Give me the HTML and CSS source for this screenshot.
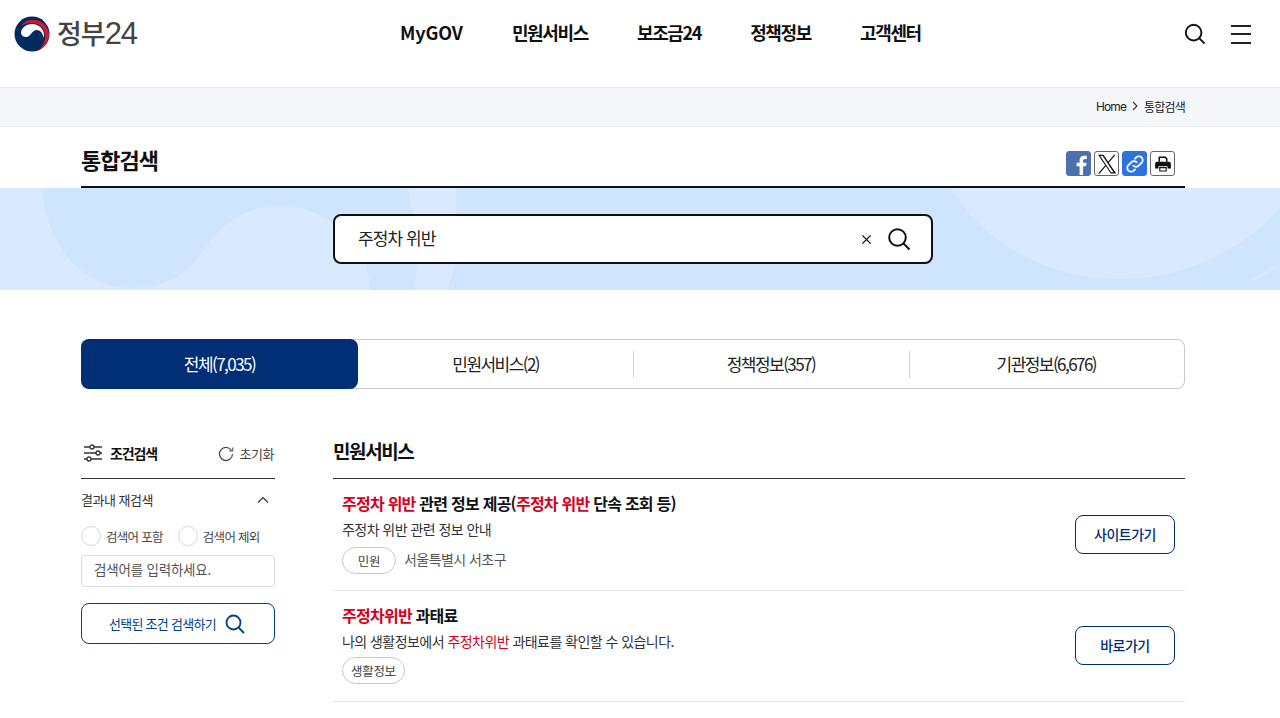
FILE: index.html
```html
<!DOCTYPE html>
<html lang="ko">
<head>
<meta charset="utf-8">
<title>통합검색 | 정부24</title>
<link rel="stylesheet" href="styles.css">
</head>
<body>
<header class="header">
  <a class="logo">
    <svg class="logo-mark" viewBox="0 0 36 36" width="36" height="36">
      <circle cx="18" cy="18" r="17.500" fill="#002b5c"/>
      <path d="M7 10C11 4 18 2.500 24 4.500 31 7 35 13 35 19c0 7-5 13-11 16 5-5 7.500-10 7-16C30.500 12 25 7 18 7c-4.500 0-8 1-11 3z" fill="#d6182f"/>
      <path d="M7 17C7 12 12 8 18 8c7 0 12 5 12 11 0 1-.2 2-.5 3-.5-5.500-4-8.500-7.500-8-4 .5-5 6-9 7-3 .5-5.500-1-6-4z" fill="#fff"/>
    </svg>
    <span class="logo-text">정부<span class="logo-num">24</span></span>
  </a>
  <nav class="gnb">
    <a class="gnb-latin">MyGOV</a><a>민원서비스</a><a>보조금24</a><a>정책정보</a><a>고객센터</a>
  </nav>
  <div class="util">
    <svg viewBox="0 0 24 24" width="22" height="22" fill="none" stroke="#111" stroke-width="2.100"><circle cx="10.500" cy="10.500" r="8.500"/><path d="M16.500 16.500l6 6"/></svg>
    <span class="burger"><i></i><i></i><i></i></span>
  </div>
</header>

<div class="crumb-bar">
  <div class="container crumb"><span class="crumb-home">Home</span><svg viewBox="0 0 8 10" width="8" height="10" fill="none" stroke="#333" stroke-width="1.100"><path d="M2 1l4 4-4 4"/></svg><span>통합검색</span></div>
</div>

<div class="container title-row">
  <h1>통합검색</h1>
  <div class="share">
    <span class="sq fb"><svg viewBox="0 0 25 25" width="25" height="25"><path d="M17.500 25v-9.500h3.200l.6-3.800h-3.800V9.500c0-1.200.5-2 2-2h2V4.200c-.7-.1-1.800-.2-3-.2-3 0-4.800 1.800-4.800 5v2.700h-3.300v3.800h3.300V25z" fill="#fff"/></svg></span>
    <span class="sq"><svg viewBox="0 0 24 24" width="20" height="20"><path d="M14.200 10.500L22.300 1h-1.900l-7 8.200L7.800 1H1.300l8.500 12.400L1.300 23.300h1.900l7.400-8.700 5.900 8.700h6.500zM3.900 2.500h2.900l13 19.400h-2.900z" fill="#111"/></svg></span>
    <span class="sq link"><svg viewBox="0 0 24 24" width="20" height="20" fill="none" stroke="#fff" stroke-width="2.200" stroke-linecap="round"><path d="M10 14a4.500 4.500 0 0 0 6.500 0l3.500-3.500a4.600 4.600 0 0 0-6.500-6.500l-1.500 1.500"/><path d="M14 10a4.500 4.500 0 0 0-6.500 0L4 13.500a4.600 4.600 0 0 0 6.500 6.500l1.500-1.500"/></svg></span>
    <span class="sq"><svg viewBox="0 0 24 24" width="18" height="18"><path d="M6 2h9.500L18 4.500V9h-2V5.500L14.500 4H8v5H6z" fill="#111"/><path d="M4 9h16a2.500 2.500 0 0 1 2.500 2.500V18H18v-3H6v3H1.500v-6.500A2.500 2.500 0 0 1 4 9z" fill="#111"/><path d="M7 16h10v6H7z" fill="#111"/><path d="M8.500 17.500h7v3h-7z" fill="#fff"/></svg></span>
  </div>
</div>

<section class="band">
  <svg class="band-bg" viewBox="0 0 1280 102" aria-hidden="true">
    <path d="M0 0h42c4 60 43 100 88 100 40 0 58-15 78-43 14-20 37-39 72-39 40 0 75 27 86 58l5 26H0z" fill="#d9eaff"/>
    <path d="M408 0l5 26 4 50-2 26h32l9-26V0z" fill="#d9eaff"/>
    <path d="M950 0c40 62 105 91 170 91 60 0 120-26 160-71V0z" fill="#d9eaff"/>
    <path d="M1247 94l33-20v4l-26 16z" fill="#d5e8ff"/>
  </svg>
  <div class="searchbox">
    <span class="query">주정차 위반</span>
    <svg viewBox="0 0 12 12" width="11" height="11" fill="none" stroke="#111" stroke-width="1.500"><path d="M1.500 1.500l9 9M10.500 1.500l-9 9"/></svg>
    <svg class="search-ic" viewBox="0 0 24 24" width="24" height="24" fill="none" stroke="#111" stroke-width="2"><circle cx="10.500" cy="10.500" r="8.300"/><path d="M16.500 16.500l6 6"/></svg>
  </div>
</section>

<div class="container">
  <div class="tabs">
    <a class="tab active">전체(7,035)</a>
    <a class="tab">민원서비스(2)</a>
    <a class="tab">정책정보(357)</a>
    <a class="tab">기관정보(6,676)</a>
  </div>

  <div class="cols">
    <aside class="side">
      <div class="side-head">
        <svg viewBox="0 0 20 20" width="20" height="20" fill="none" stroke="#333" stroke-width="1.300"><path d="M1 4h6M11 4h8M1 10h12M17 10h2M1 16h3M8 16h11"/><circle cx="9" cy="4" r="2"/><circle cx="15" cy="10" r="2"/><circle cx="6" cy="16" r="2"/></svg>
        <strong>조건검색</strong>
        <span class="reset"><svg viewBox="0 0 16 16" width="16" height="16" fill="none" stroke="#444" stroke-width="1.200"><path d="M13.500 5.500A6.500 6.500 0 1 0 14.500 9"/><path d="M14.800 2.500v3.500h-3.500" stroke-width="1"/></svg>초기화</span>
      </div>
      <div class="side-sub">
        <span>결과내 재검색</span>
        <svg viewBox="0 0 12 8" width="12" height="8" fill="none" stroke="#333" stroke-width="1.200"><path d="M1 6.500l5-5 5 5"/></svg>
      </div>
      <div class="radios">
        <label class="radio"><i></i>검색어 포함</label>
        <label class="radio"><i></i>검색어 제외</label>
      </div>
      <div class="side-input">검색어를 입력하세요.</div>
      <button class="side-btn">선택된 조건 검색하기
        <svg viewBox="0 0 20 20" width="20" height="20" fill="none" stroke="#00408f" stroke-width="1.800"><circle cx="8.500" cy="8.500" r="7"/><path d="M13.500 13.500l5.500 5.500"/></svg>
      </button>
    </aside>

    <main class="results">
      <h2>민원서비스</h2>
      <article class="item">
        <div class="item-body">
          <h3><em>주정차 위반</em> 관련 정보 제공(<em>주정차 위반</em> 단속 조회 등)</h3>
          <p>주정차 위반 관련 정보 안내</p>
          <div class="meta"><span class="pill pill-wide">민원</span><span>서울특별시 서초구</span></div>
        </div>
        <a class="go">사이트가기</a>
      </article>
      <article class="item second">
        <div class="item-body">
          <h3><em>주정차위반</em> 과태료</h3>
          <p>나의 생활정보에서 <em>주정차위반</em> 과태료를 확인할 수 있습니다.</p>
          <div class="meta"><span class="pill">생활정보</span></div>
        </div>
        <a class="go">바로가기</a>
      </article>
    </main>
  </div>
</div>
</body>
</html>
```

FILE: styles.css
```css
* { box-sizing: border-box; }
html, body { margin: 0; padding: 0; }
body {
  height: 718px;
  overflow: hidden;
  background: #fff;
  color: #111;
  font-family: "Noto Sans CJK KR", "Noto Sans", sans-serif;
  font-size: 14px;
  letter-spacing: -0.5px;
}
h1, h2, h3, p { margin: 0; }
em { font-style: normal; color: #d6001c; }
.container { width: 1104px; margin-left: 81px; }

.header { height: 87px; position: relative; display: flex; align-items: flex-start; }
.logo { position: absolute; left: 14px; top: 15px; display: flex; align-items: center; gap: 7px; }
.logo-text { font-size: 27px; line-height: 36px; color: #444; font-weight: 500; letter-spacing: -1px; }
.logo-num { font-family: "Liberation Sans", sans-serif; font-size: 31px; font-weight: 400; letter-spacing: -1.300px; }
.gnb { display: flex; gap: 49px; margin: 19px 0 0 400px; }
.gnb a { font-size: 18px; line-height: 27px; font-weight: 700; letter-spacing: -1.350px; color: #111; }
.gnb a.gnb-latin { letter-spacing: -0.100px; }
.util { position: absolute; left: 1184px; top: 23px; display: flex; align-items: center; gap: 25px; }
.burger { display: flex; flex-direction: column; gap: 6.500px; width: 20px; }
.burger i { display: block; height: 2px; background: #222; }

.crumb-bar { height: 40px; background: #f4f6fa; border-top: 1px solid #e8e9ec; border-bottom: 1px solid #eeeff1; }
.crumb { display: flex; justify-content: flex-end; align-items: center; gap: 5px; height: 36px; font-size: 12px; color: #222; letter-spacing: -0.8px; }
.crumb-home { font-family: "Inter", sans-serif; letter-spacing: -0.900px; }

.title-row { height: 61px; border-bottom: 2px solid #111; display: flex; justify-content: space-between; padding-top: 16px; }
.title-row h1 { font-size: 22px; line-height: 33px; font-weight: 700; letter-spacing: -1px; }
.share { display: flex; gap: 3px; margin: 8px 10px 0 0; height: 25px; }
.sq { width: 25px; height: 25px; border: 1px solid #666; border-radius: 3px; display: flex; align-items: center; justify-content: center; overflow: hidden; background: #fff; }
.sq.fb { background: #4c6fb0; border-color: #4c6fb0; }
.sq.link { background: #2b74e0; border-color: #2b74e0; }

.band { height: 102px; position: relative; background: #cfe5fe; overflow: hidden; display: flex; padding: 26px 0 0 333px; }
.band-bg { position: absolute; left: 0; top: 0; width: 1280px; height: 102px; }
.searchbox { position: relative; width: 600px; height: 50px; background: #fff; border: 2px solid #111; border-radius: 8px; display: flex; align-items: center; padding: 0 20px 0 23px; gap: 15px; }
.query { flex: 1; font-size: 17px; line-height: 24px; margin-top: -2px; letter-spacing: -0.900px; color: #222; }

.tabs { margin-top: 49px; height: 50px; border: 1px solid #c9c9c9; border-radius: 8px; display: flex; }
.tab { flex: 1; display: flex; align-items: center; justify-content: center; padding-bottom: 2px; font-size: 17px; letter-spacing: -1.550px; position: relative; color: #222; }
.tab + .tab::before { content: ""; position: absolute; left: 0; top: 11px; height: 27px; width: 1px; background: #d5d5d5; }
.tab.active { background: #002f76; color: #fff; margin: -1px 0 -1px -1px; border-radius: 8px; flex: 0 0 277px; }
.tab.active + .tab::before { display: none; }

.cols { display: flex; gap: 58px; margin-top: 46px; }
.side { width: 194px; flex: none; }
.side-head { display: flex; align-items: center; height: 44px; border-bottom: 1px solid #333; padding: 0 0 7px 2px; }
.side-head strong { font-size: 14px; font-weight: 700; letter-spacing: -1.100px; margin-left: 7px; }
.reset { margin-left: auto; display: flex; align-items: center; gap: 6px; font-size: 13px; color: #444; letter-spacing: -0.5px; margin-right: 1px; }
.side-sub { display: flex; justify-content: space-between; align-items: center; height: 43px; padding: 0 6px 2px 0; font-size: 13px; color: #333; letter-spacing: -0.5px; }
.radios { display: flex; gap: 15px; margin-top: 4px; height: 20px; }
.radio { display: flex; align-items: center; gap: 5px; font-size: 12.500px; color: #444; letter-spacing: -0.700px; }
.radio i { width: 20px; height: 20px; border: 1px solid #d8d8d8; border-radius: 50%; background: #fff; }
.side-input { height: 32px; margin-top: 9px; border: 1px solid #ddd; border-radius: 3px; font-size: 13.500px; color: #555; padding-left: 12px; line-height: 27px; letter-spacing: -0.2px; }
.side-btn { display: flex; align-items: center; justify-content: center; gap: 9px; width: 194px; height: 41px; margin-top: 16px; background: #fff; border: 1px solid #00408f; border-radius: 8px; font: inherit; font-size: 13px; color: #00408f; letter-spacing: -0.700px; padding: 0 2px 0 0; }

.results { flex: 1; min-width: 0; }
.results h2 { height: 44px; font-size: 19px; line-height: 32px; font-weight: 700; letter-spacing: -1.400px; border-bottom: 1px solid #333; }
.item { display: flex; align-items: center; justify-content: space-between; padding: 12px 10px 0 9px; height: 112px; border-bottom: 1px solid #e3e3e3; }
.item.second { height: 111px; }
.item-body { align-self: flex-start; }
.item h3 { font-size: 16px; line-height: 25px; font-weight: 700; letter-spacing: -0.750px; color: #111; }
.item p { font-size: 14px; line-height: 21px; margin-top: 3px; color: #333; letter-spacing: -0.550px; }
.meta { display: flex; align-items: center; gap: 8px; margin-top: 7px; font-size: 14px; color: #555; letter-spacing: -0.550px; }
.meta > span:not(.pill) { margin-top: -4px; }
.second .meta { margin-top: 5px; }
.pill { height: 27px; padding: 0 8px; border: 1px solid #c7c7c7; border-radius: 14px; display: flex; align-items: center; font-size: 12.500px; color: #444; letter-spacing: -0.3px; }
.pill-wide { width: 54px; justify-content: center; }
.go { width: 100px; height: 39px; border: 1px solid #002f76; border-radius: 8px; display: flex; align-items: center; justify-content: center; font-size: 14px; color: #002f76; font-weight: 500; letter-spacing: -0.5px; margin-top: -13px; }
.second .go { margin-top: -14px; }
```
